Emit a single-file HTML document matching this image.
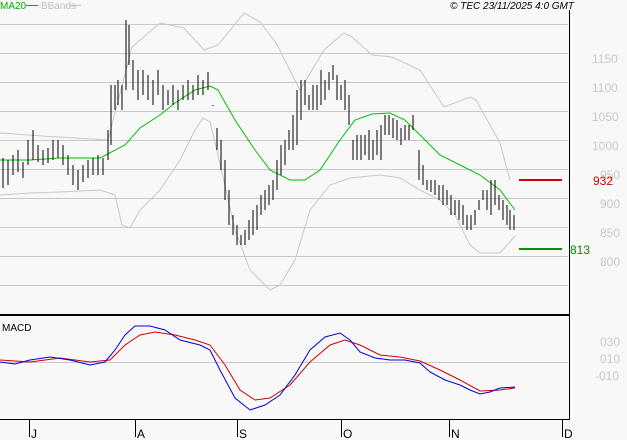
<!DOCTYPE html>
<html><head><meta charset="utf-8"><style>
body{margin:0;background:#f8f8f8;width:627px;height:440px;overflow:hidden}
svg{display:block;font-family:"Liberation Sans",sans-serif}
</style></head><body>
<svg width="627" height="440" viewBox="0 0 627 440">
<rect width="627" height="440" fill="#f8f8f8"/>
<g stroke="#c8c8c8" stroke-width="1">
<line x1="0" y1="24.5" x2="568" y2="24.5"/><line x1="0" y1="53.5" x2="568" y2="53.5"/>
<line x1="0" y1="82.5" x2="568" y2="82.5"/><line x1="0" y1="111.5" x2="568" y2="111.5"/>
<line x1="0" y1="140.5" x2="568" y2="140.5"/><line x1="0" y1="169.5" x2="568" y2="169.5"/>
<line x1="0" y1="198.5" x2="568" y2="198.5"/><line x1="0" y1="227.5" x2="568" y2="227.5"/>
<line x1="0" y1="256.5" x2="568" y2="256.5"/><line x1="0" y1="285.5" x2="568" y2="285.5"/>
<line x1="0" y1="362.5" x2="568" y2="362.5"/>
</g>
<g fill="#c8c8c8" font-size="12">
<text x="592" y="63">1150</text><text x="592" y="92">1100</text><text x="592" y="121">1050</text>
<text x="592" y="150">1000</text><text x="600" y="179">950</text><text x="600" y="208">900</text>
<text x="600" y="237">850</text><text x="600" y="266">800</text>
<text x="600" y="346">030</text><text x="600" y="363">010</text><text x="595" y="380">-010</text>
</g>
<polyline fill="none" stroke="#c8c8c8" points="0,133 42,136 108,140 132,47 160,23 184,28 204,50 218,45 244,13 260,22 276,43 300,90 324,50 344,33 352,37 372,55 392,57 420,70 444,107 470,97 476,100 500,143 510,180"/>
<polyline fill="none" stroke="#c8c8c8" points="0,195 30,193 60,192 100,190 115,195 122,225 130,228 140,210 160,190 180,160 195,130 203,118 210,122 218,155 235,230 250,270 270,290 280,285 295,260 310,210 330,185 350,178 380,175 400,178 420,190 440,200 455,215 470,245 480,253 500,253 515,236"/>
<polyline fill="none" stroke="#00c000" points="0,160 30,160 60,158 100,158 125,145 140,128 160,115 175,103 195,90 210,86 218,90 235,120 255,150 270,170 290,180 305,180 320,170 340,140 355,120 372,114 390,113 405,120 420,135 440,155 460,165 480,175 500,190 515,210"/>
<path stroke="#000" stroke-width="1" shape-rendering="crispEdges" fill="none" d="M3 158V188M8 160V185M13 155V175M18 150V172M23 162V178M28 140V165M33 130V160M38 145V162M43 150V165M48 148V163M53 140V160M58 140V158M63 145V165M68 155V175M73 165V185M78 170V190M83 165V182M88 160V178M93 158V175M98 155V175M103 158V175M108 130V160M111 85V145M115 85V110M118 80V105M122 85V110M126 20V90M129 25V65M133 60V90M138 70V100M143 70V95M148 75V100M153 80V105M158 70V95M163 85V110M168 90V105M173 85V105M178 90V110M183 85V100M188 80V100M193 85V100M198 75V95M203 80V95M208 72V90M213 105V106M217 128V150M221 140V170M225 160V200M229 190V225M233 215V235M237 225V245M241 235V245M245 230V245M249 220V240M253 210V235M257 205V230M261 195V215M265 190V210M269 185V205M273 180V200M277 160V190M281 145V175M285 140V165M289 130V150M293 115V150M297 90V145M301 80V120M305 80V105M309 95V110M313 85V110M317 85V110M321 70V105M325 80V100M329 72V90M333 65V80M337 75V100M341 85V100M345 80V110M349 95V125M353 140V160M357 135V160M361 135V160M365 135V155M369 130V160M373 140V160M377 130V155M381 125V160M385 115V135M389 115V135M393 118V138M397 120V140M401 128V145M405 125V140M409 125V140M413 115V130M419 150V180M423 165V185M427 180V190M431 180V192M435 180V195M439 185V200M443 185V205M447 190V205M451 195V215M455 200V215M459 200V220M463 205V225M467 215V230M471 215V230M475 210V225M479 200V210M483 190V200M487 190V210M491 180V215M495 180V205M499 195V210M503 200V220M507 205V225M510 210V230M514 215V230"/>
<line x1="519" y1="180" x2="562" y2="180" stroke="#d00000" stroke-width="2"/>
<text x="593" y="185" fill="#d00000" font-size="12">932</text>
<line x1="519" y1="249" x2="562" y2="249" stroke="#009000" stroke-width="2"/>
<text x="570" y="254" fill="#009000" font-size="12">813</text>
<polyline fill="none" stroke="#d00000" points="0,360 30,362 60,358 90,362 110,360 125,345 140,335 155,332 175,335 195,340 210,345 225,365 240,390 255,400 270,398 290,385 310,362 330,345 345,340 360,345 380,355 400,357 420,361 440,370 460,380 480,391 500,390 515,388"/>
<polyline fill="none" stroke="#0000e0" points="0,362 15,364 30,360 50,357 70,360 90,365 105,362 115,350 125,335 135,326 150,326 165,330 180,340 200,345 210,350 220,370 235,398 250,410 265,405 280,395 295,375 310,350 325,337 340,333 350,340 360,352 375,358 390,360 405,360 420,363 430,372 445,380 460,385 470,390 480,394 490,392 500,388 515,387"/>
<line x1="0" y1="315" x2="569" y2="315" stroke="#000" stroke-width="2"/>
<line x1="569.5" y1="10" x2="569.5" y2="420" stroke="#000"/>
<line x1="0" y1="419.5" x2="570" y2="419.5" stroke="#000"/>
<g stroke="#000"><line x1="29.5" y1="419" x2="29.5" y2="437"/><line x1="135.5" y1="419" x2="135.5" y2="437"/><line x1="237.5" y1="419" x2="237.5" y2="437"/><line x1="341.5" y1="419" x2="341.5" y2="437"/><line x1="449.5" y1="419" x2="449.5" y2="437"/><line x1="562.5" y1="419" x2="562.5" y2="437"/></g>
<g font-size="12" fill="#000"><text x="31" y="438">J</text><text x="137" y="438">A</text><text x="239" y="438">S</text><text x="343" y="438">O</text><text x="451" y="438">N</text><text x="564" y="438">D</text></g>
<text x="2" y="331" font-size="10" fill="#000">MACD</text>
<text x="0" y="9" font-size="10" fill="#00b000">MA20</text><line x1="26" y1="5.5" x2="38" y2="5.5" stroke="#00b000"/>
<text x="41" y="9" font-size="10" fill="#c0c0c0">BBands</text><line x1="70" y1="5.5" x2="81" y2="5.5" stroke="#c0c0c0"/>
<text x="574" y="9" font-size="10" font-style="italic" fill="#000" text-anchor="end">© TEC 23/11/2025 4:0 GMT</text>
</svg>
</body></html>
